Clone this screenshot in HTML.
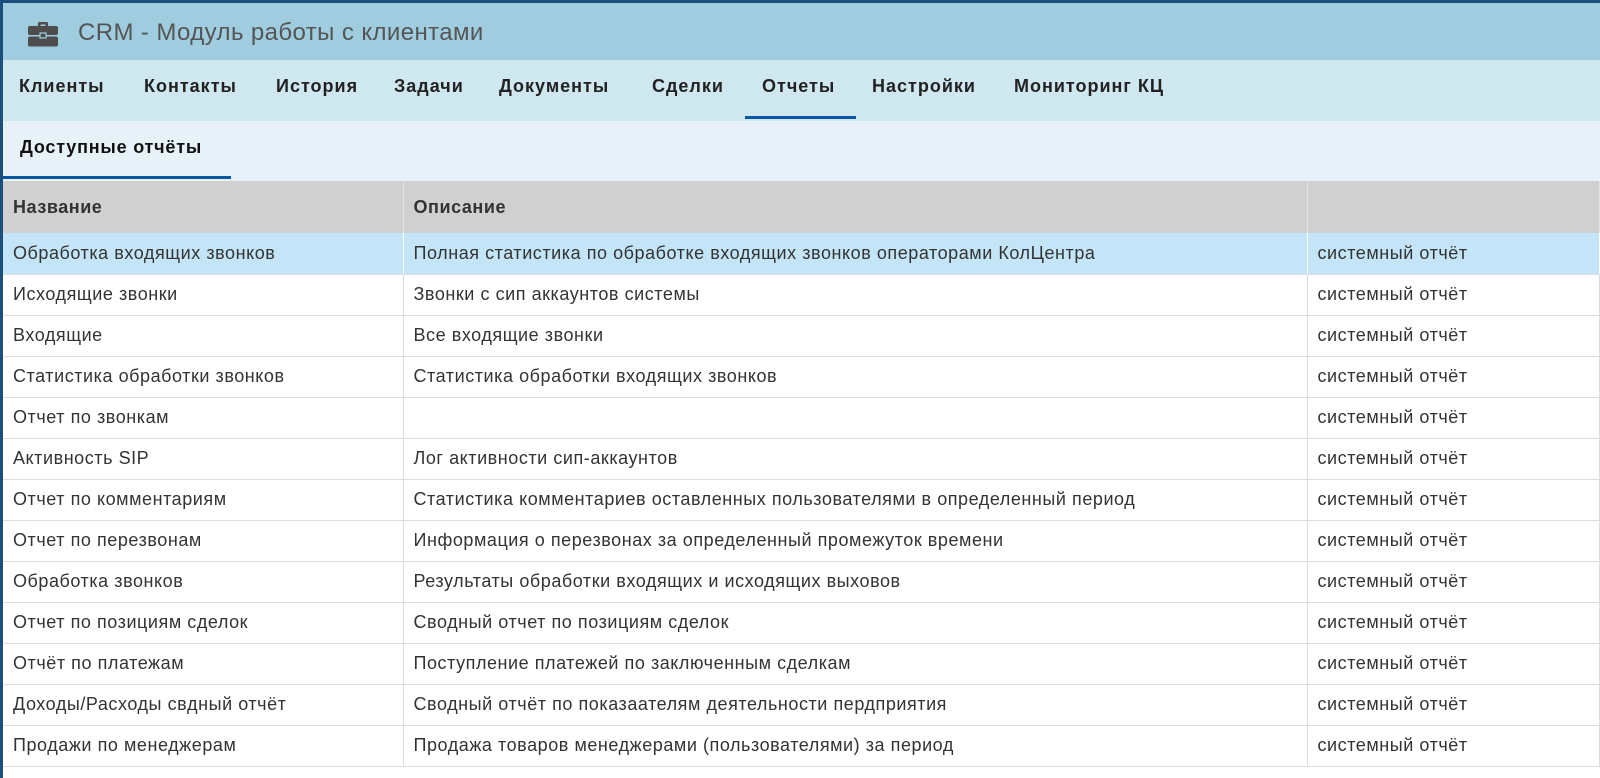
<!DOCTYPE html>
<html><head><meta charset="utf-8"><style>
*{margin:0;padding:0;box-sizing:border-box}
body{width:1600px;height:778px;overflow:hidden;background:#1d4f7c;font-family:"Liberation Sans","DejaVu Sans",sans-serif;position:relative}
#app{position:absolute;left:3px;top:3px;right:0;bottom:0;background:#fff;overflow:hidden}
.top{height:57px;background:#9fcddf;position:relative}
.top .t{position:absolute;left:75px;top:16px;font-size:24px;color:#555;letter-spacing:0.4px}
.nav{height:61px;background:#cfe7ef;position:relative}
.nav span{position:absolute;top:16px;font-size:18px;font-weight:bold;color:#222;letter-spacing:1px}
.nav .ul{position:absolute;left:742px;top:56px;width:111px;height:3px;background:#0a56a4}
.sub{height:60px;background:#e6f2f8;position:relative}
.sub span{position:absolute;left:17px;top:16px;font-size:18px;font-weight:bold;color:#111;letter-spacing:0.8px}
.sub .ul{position:absolute;left:0;top:55px;width:228px;height:3px;background:#0a56a4}
table{border-collapse:collapse;width:1597px;table-layout:fixed;font-size:18px;color:#333;letter-spacing:0.55px}
th{background:#d0d0d0;height:52px;text-align:left;padding-left:10px;font-weight:bold;color:#333;border-right:1px solid #e2e2e2}
td{height:41px;padding-left:10px;border-bottom:1px solid #ddd;border-right:1px solid #ddd;white-space:nowrap;overflow:hidden}
tr.sel td{background:#c4e5f7;border-right-color:#fff}
</style></head><body><div id="app">
<div class="top">
<svg style="position:absolute;left:24px;top:18px" width="32" height="26" viewBox="0 0 32 26"><path d="M11 5V2.5Q11 1 12.5 1h7Q21 1 21 2.5V5h-2.5V3.5h-5V5z" fill="#4d4d4d"/><rect x="1" y="5" width="30" height="9" rx="2" fill="#4d4d4d"/><rect x="1" y="15.5" width="30" height="10" rx="2" fill="#4d4d4d"/><rect x="13" y="12" width="6" height="5" fill="#4d4d4d" stroke="#9fcddf" stroke-width="1.2"/></svg>
<div class="t">CRM - Модуль работы с клиентами</div></div>
<div class="nav">
<span style="left:16px">Клиенты</span><span style="left:141px">Контакты</span><span style="left:273px">История</span><span style="left:391px">Задачи</span><span style="left:496px">Документы</span><span style="left:649px">Сделки</span><span style="left:759px">Отчеты</span><span style="left:869px">Настройки</span><span style="left:1011px">Мониторинг КЦ</span>
<div class="ul"></div></div>
<div class="sub"><span>Доступные отчёты</span><div class="ul"></div></div>
<table>
<colgroup><col style="width:400px"><col style="width:904px"><col></colgroup>
<tr><th>Название</th><th>Описание</th><th></th></tr>
<tr class="sel"><td>Обработка входящих звонков</td><td>Полная статистика по обработке входящих звонков операторами КолЦентра</td><td>системный отчёт</td></tr>
<tr><td>Исходящие звонки</td><td>Звонки с сип аккаунтов системы</td><td>системный отчёт</td></tr>
<tr><td>Входящие</td><td>Все входящие звонки</td><td>системный отчёт</td></tr>
<tr><td>Статистика обработки звонков</td><td>Статистика обработки входящих звонков</td><td>системный отчёт</td></tr>
<tr><td>Отчет по звонкам</td><td></td><td>системный отчёт</td></tr>
<tr><td>Активность SIP</td><td>Лог активности сип-аккаунтов</td><td>системный отчёт</td></tr>
<tr><td>Отчет по комментариям</td><td>Статистика комментариев оставленных пользователями в определенный период</td><td>системный отчёт</td></tr>
<tr><td>Отчет по перезвонам</td><td>Информация о перезвонах за определенный промежуток времени</td><td>системный отчёт</td></tr>
<tr><td>Обработка звонков</td><td>Результаты обработки входящих и исходящих выховов</td><td>системный отчёт</td></tr>
<tr><td>Отчет по позициям сделок</td><td>Сводный отчет по позициям сделок</td><td>системный отчёт</td></tr>
<tr><td>Отчёт по платежам</td><td>Поступление платежей по заключенным сделкам</td><td>системный отчёт</td></tr>
<tr><td>Доходы/Расходы свдный отчёт</td><td>Сводный отчёт по показаателям деятельности пердприятия</td><td>системный отчёт</td></tr>
<tr><td>Продажи по менеджерам</td><td>Продажа товаров менеджерами (пользователями) за период</td><td>системный отчёт</td></tr>
</table>
</div></body></html>
